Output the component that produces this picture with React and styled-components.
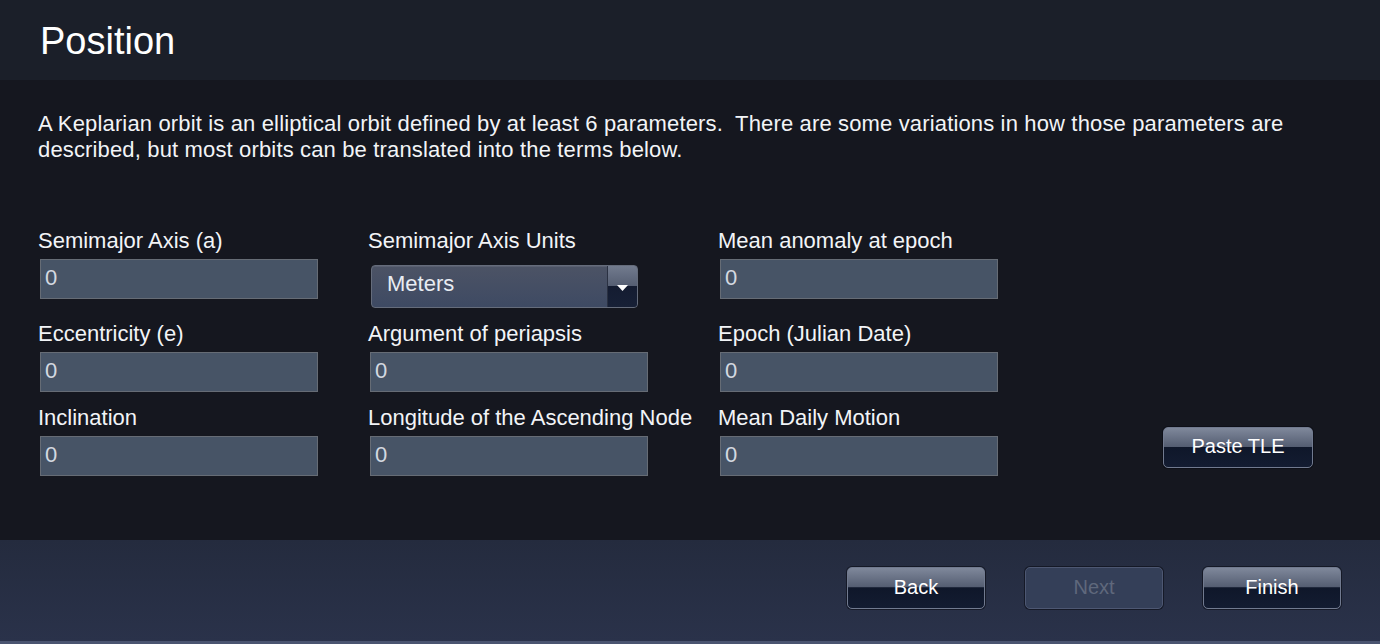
import React from "react";
import styled, { createGlobalStyle } from "styled-components";

const Global = createGlobalStyle`
  html, body { margin: 0; padding: 0; background: #15171f; }
  body { font-family: "Liberation Sans", Arial, sans-serif; }
  * { box-sizing: border-box; }
`;

const Page = styled.div`
  width: 1380px;
  height: 644px;
  display: flex;
  flex-direction: column;
  background: #15171f;
  color: #f2f4f7;
  font-family: "Liberation Sans", Arial, sans-serif;
`;

const Header = styled.header`
  height: 80px;
  flex: none;
  background: #1b1f29;
  padding: 2px 40px 0;
`;

const Title = styled.h1`
  margin: 0;
  font-size: 38px;
  font-weight: 400;
  line-height: 78px;
  color: #ffffff;
`;

const Body = styled.main`
  flex: 1;
  padding: 31px 40px 0 38px;
`;

const Intro = styled.p`
  margin: 0;
  font-size: 22px;
  line-height: 26px;
  letter-spacing: 0.15px;
  color: #f2f4f7;
`;

const FieldGrid = styled.div`
  margin-top: 65px;
  display: grid;
  grid-template-columns: 330px 350px 330px 1fr;
  row-gap: 13px;
  align-items: start;
`;

const Field = styled.div`
  display: flex;
  flex-direction: column;
  gap: 6px;
`;

const Label = styled.label`
  padding-top: 1px;
  font-size: 22px;
  line-height: 24px;
  color: #f2f4f7;
  white-space: nowrap;
`;

const TextInput = styled.input`
  width: 278px;
  height: 40px;
  margin: 0 0 0 2px;
  padding: 0 4px 2px;
  background: #475466;
  border: 1px solid #666c75;
  border-radius: 0;
  color: #d4d9e0;
  font-family: "Liberation Sans", Arial, sans-serif;
  font-size: 22px;
  outline: none;
`;

const Select = styled.div`
  width: 267px;
  height: 43px;
  margin: 6px 0 0 3px;
  display: flex;
  align-items: stretch;
  border: 1px solid #656c7b;
  border-radius: 4px;
  overflow: hidden;
  background: linear-gradient(#4c5365, #3e4a63);
  box-shadow: inset 0 1px 0 rgba(255, 255, 255, 0.08);
`;

const SelectValue = styled.span`
  flex: 1;
  padding: 0 0 6px 15px;
  display: flex;
  align-items: center;
  font-size: 22px;
  color: #e8ecf2;
`;

const SelectArrow = styled.span`
  width: 30px;
  display: flex;
  align-items: center;
  justify-content: center;
  padding-top: 2px;
  background: linear-gradient(#727b8e 0%, #555e72 49%, #141c31 50%, #172036 100%);
  border-left: 1px solid #2a3142;
`;

const GlossButton = styled.button`
  width: ${(p) => p.$w}px;
  height: ${(p) => p.$h}px;
  padding: 0 0 2px;
  border-radius: 5px;
  font-family: "Liberation Sans", Arial, sans-serif;
  font-size: 20px;
  cursor: default;
  border: 1px solid ${(p) => (p.disabled ? "#4d5772" : "#717a8f")};
  color: ${(p) => (p.disabled ? "#5f687c" : "#ffffff")};
  background: ${(p) =>
    p.disabled
      ? "#343f58"
      : "linear-gradient(#7f889b 0%, #545d71 48%, #0f172a 49%, #131c31 100%)"};
  box-shadow: 0 0 0 1px rgba(8, 10, 16, 0.55);
`;

const PasteCell = styled.div`
  grid-column: 4;
  grid-row: 3;
  align-self: end;
  justify-self: end;
  margin: 0 27px 8px 0;
`;

const Footer = styled.footer`
  height: 104px;
  flex: none;
  display: flex;
  justify-content: flex-end;
  align-items: flex-start;
  gap: 40px;
  padding: 27px 39px 0 0;
  background: linear-gradient(#242b3e, #2a324a);
  border-bottom: 3px solid #4a5470;
`;

const fields = [
  { label: "Semimajor Axis (a)" },
  { label: "Semimajor Axis Units", select: "Meters" },
  { label: "Mean anomaly at epoch" },
  null,
  { label: "Eccentricity (e)" },
  { label: "Argument of periapsis" },
  { label: "Epoch (Julian Date)" },
  null,
  { label: "Inclination" },
  { label: "Longitude of the Ascending Node" },
  { label: "Mean Daily Motion" },
];

export default function App() {
  return (
    <Page>
      <Global />
      <Header>
        <Title>Position</Title>
      </Header>
      <Body>
        <Intro>
          A Keplarian orbit is an elliptical orbit defined by at least 6 parameters.&nbsp; There are some
          variations in how those parameters are described, but most orbits can be translated into the
          terms below.
        </Intro>
        <FieldGrid>
          {fields.map((f, i) =>
            f ? (
              <Field key={i}>
                <Label>{f.label}</Label>
                {f.select ? (
                  <Select>
                    <SelectValue>{f.select}</SelectValue>
                    <SelectArrow>
                      <svg width="11" height="6" viewBox="0 0 11 6">
                        <polygon points="0,0 11,0 5.5,6" fill="#ffffff" />
                      </svg>
                    </SelectArrow>
                  </Select>
                ) : (
                  <TextInput readOnly value="0" />
                )}
              </Field>
            ) : (
              <div key={i} />
            )
          )}
          <PasteCell>
            <GlossButton $w={150} $h={41}>Paste TLE</GlossButton>
          </PasteCell>
        </FieldGrid>
      </Body>
      <Footer>
        <GlossButton $w={138} $h={42}>Back</GlossButton>
        <GlossButton $w={138} $h={42} disabled>Next</GlossButton>
        <GlossButton $w={138} $h={42}>Finish</GlossButton>
      </Footer>
    </Page>
  );
}
